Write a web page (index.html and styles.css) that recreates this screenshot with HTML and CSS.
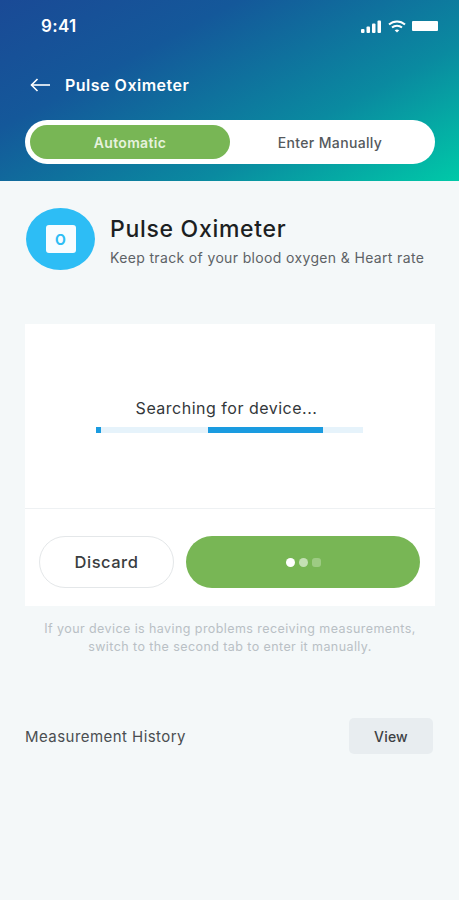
FILE: index.html

```html
<!DOCTYPE html>
<html lang="en">
<head>
    <meta charset="UTF-8">
    <meta name="viewport" content="width=device-width, initial-scale=1.0">
    <title>Pulse Oximeter</title>
    <link rel="stylesheet" href="styles.css">
</head>
<body>
    <!-- Header -->
    <header class="header">
        <div class="status-bar">
            <span class="time">9:41</span>
            <div class="status-icons">
                <svg width="21" height="13" viewBox="0 0 21 13" fill="#fff">
                    <rect x="0" y="9" width="3.5" height="4" rx="1"/>
                    <rect x="5.5" y="6.5" width="3.5" height="6.5" rx="1"/>
                    <rect x="11" y="3.5" width="3.5" height="9.5" rx="1"/>
                    <rect x="16.5" y="0.5" width="3.5" height="12.5" rx="1"/>
                </svg>
                <svg width="18" height="13" viewBox="0 0 18 13" fill="none" stroke="#fff" stroke-width="2">
                    <path d="M1 4.6 C5.5 0.4 12.5 0.4 17 4.6"/>
                    <path d="M4 7.6 C6.8 5.2 11.2 5.2 14 7.6"/>
                    <path d="M9 12.6 L6.7 10.3 C8 9.2 10 9.2 11.3 10.3 Z" fill="#fff" stroke="none"/>
                </svg>
                <div class="battery"></div>
            </div>
        </div>
        <div class="nav">
            <svg width="20" height="14" viewBox="0 0 20 14" fill="none" stroke="#fff" stroke-width="1.6">
                <path d="M20 7 H1.5"/>
                <path d="M7.5 1 L1.5 7 L7.5 13"/>
            </svg>
            <span class="nav-title">Pulse Oximeter</span>
        </div>
        <div class="tabs">
            <div class="tab tab-active">Automatic</div>
            <div class="tab">Enter Manually</div>
        </div>
    </header>

    <main class="content">
        <!-- Device intro -->
        <section class="intro">
            <div class="intro-icon">
                <div class="intro-square">O</div>
            </div>
            <div>
                <h1 class="intro-title">Pulse Oximeter</h1>
                <p class="intro-sub">Keep track of your blood oxygen &amp; Heart rate</p>
            </div>
        </section>

        <!-- Search card -->
        <section class="card">
            <div class="card-top">
                <p class="searching">Searching for device...</p>
                <div class="progress">
                    <div class="progress-start"></div>
                    <div class="progress-bar"></div>
                </div>
            </div>
            <div class="card-actions">
                <button class="btn-discard">Discard</button>
                <button class="btn-loading">
                    <span class="dot dot-1"></span>
                    <span class="dot dot-2"></span>
                    <span class="dot dot-3"></span>
                </button>
            </div>
        </section>

        <p class="note">If your device is having problems receiving measurements,<br>switch to the second tab to enter it manually.</p>

        <section class="history">
            <span class="history-label">Measurement History</span>
            <button class="btn-view">View</button>
        </section>
    </main>
</body>
</html>
```

FILE: styles.css

```css
* {
    box-sizing: border-box;
}

body {
    font-family: Inter, "Liberation Sans", sans-serif;
    margin: 0;
    padding: 0;
    height: 900px;
    overflow: hidden;
    background: #f4f8f9;
    color: #1c1f22;
}

.header {
    height: 181px;
    padding: 0 21px 0 25px;
    background: linear-gradient(152deg, #1a4a96 0%, #14589a 30%, #0a8aa0 68%, #00c9a8 100%);
    color: white;
}

.status-bar {
    height: 52px;
    padding: 16px 0 0 16px;
    display: flex;
    justify-content: space-between;
    align-items: flex-start;
}

.time {
    font-size: 17px;
    font-weight: 600;
    line-height: 20px;
    letter-spacing: 0.3px;
}

.status-icons {
    display: flex;
    align-items: center;
    gap: 6px;
    height: 20px;
}

.battery {
    width: 26px;
    height: 10px;
    background: white;
    border-radius: 1px;
}

.nav {
    height: 68px;
    padding: 0 0 2px 5px;
    display: flex;
    align-items: center;
    gap: 15px;
}

.nav-title {
    font-size: 16px;
    font-weight: 600;
    letter-spacing: 0.5px;
}

.tabs {
    width: 410px;
    height: 44px;
    padding: 5px;
    display: flex;
    background: white;
    border-radius: 22px;
}

.tab {
    width: 200px;
    flex: none;
    display: flex;
    align-items: center;
    justify-content: center;
    border-radius: 17px;
    font-size: 14px;
    font-weight: 500;
    letter-spacing: 0.35px;
    color: #55595c;
}

.tab + .tab {
    flex: 1;
    padding-top: 1px;
}

.tab-active {
    background: #78b655;
    color: #e6f2dd;
    font-weight: 600;
}

.content {
    padding: 0 24px 0 25px;
}

.intro {
    margin-top: 27px;
    display: flex;
    gap: 15px;
}

.intro-icon {
    width: 69px;
    height: 62px;
    margin-left: 1px;
    flex: none;
    display: flex;
    align-items: center;
    justify-content: center;
    background: #2dbdf5;
    border-radius: 50%;
}

.intro-square {
    width: 30px;
    height: 28px;
    display: flex;
    align-items: center;
    justify-content: center;
    background: #f7fcff;
    border-radius: 3px;
    color: #2dbdf5;
    font-size: 14px;
    font-weight: 700;
}

.intro-title {
    margin: 7px 0 0;
    font-size: 23px;
    font-weight: 500;
    line-height: 28px;
    letter-spacing: 0.7px;
}

.intro-sub {
    margin: 6px 0 0;
    font-size: 14px;
    line-height: 18px;
    letter-spacing: 0.35px;
    white-space: nowrap;
    color: #5d6266;
}

.card {
    margin-top: 54px;
    background: white;
}

.card-top {
    height: 185px;
    border-bottom: 1px solid #eef1f3;
    padding: 74px 7px 0 0;
}

.searching {
    margin: 0;
    text-align: center;
    font-size: 16px;
    line-height: 20px;
    letter-spacing: 0.5px;
    color: #33373a;
}

.progress {
    width: 267px;
    height: 6px;
    margin: 9px 0 0 71px;
    display: flex;
    background: #e6f3fb;
}

.progress-start {
    width: 5px;
    background: #1a9be0;
}

.progress-bar {
    width: 115px;
    margin-left: 107px;
    background: #1a9be0;
}

.card-actions {
    height: 97px;
    padding: 27px 15px 18px 14px;
    display: flex;
    gap: 12px;
}

button {
    font-family: inherit;
    border: none;
    cursor: pointer;
}

.btn-discard {
    width: 135px;
    background: white;
    border: 1px solid #e4e7e9;
    border-radius: 26px;
    font-size: 16.5px;
    font-weight: 500;
    letter-spacing: 0.5px;
    color: #3a3d40;
}

.btn-loading {
    width: 234px;
    display: flex;
    align-items: center;
    justify-content: center;
    gap: 4px;
    background: #78b655;
    border-radius: 26px;
}

.dot {
    width: 9px;
    height: 9px;
    border-radius: 50%;
}

.dot-1 {
    background: white;
}

.dot-2 {
    background: #c4e0b4;
}

.dot-3 {
    background: #9dcb83;
    border-radius: 3px;
}

.note {
    margin: 14px 0 0;
    text-align: center;
    font-size: 12.5px;
    line-height: 18px;
    letter-spacing: 0.42px;
    white-space: nowrap;
    color: #b9c0c5;
}

.history {
    margin-top: 62px;
    padding-right: 2px;
    display: flex;
    justify-content: space-between;
    align-items: center;
}

.history-label {
    font-size: 15px;
    letter-spacing: 0.45px;
    color: #4a4e51;
}

.btn-view {
    width: 84px;
    height: 36px;
    background: #e8edf0;
    border-radius: 5px;
    font-size: 14px;
    font-weight: 500;
    letter-spacing: 0.2px;
    color: #3d4144;
}
```
